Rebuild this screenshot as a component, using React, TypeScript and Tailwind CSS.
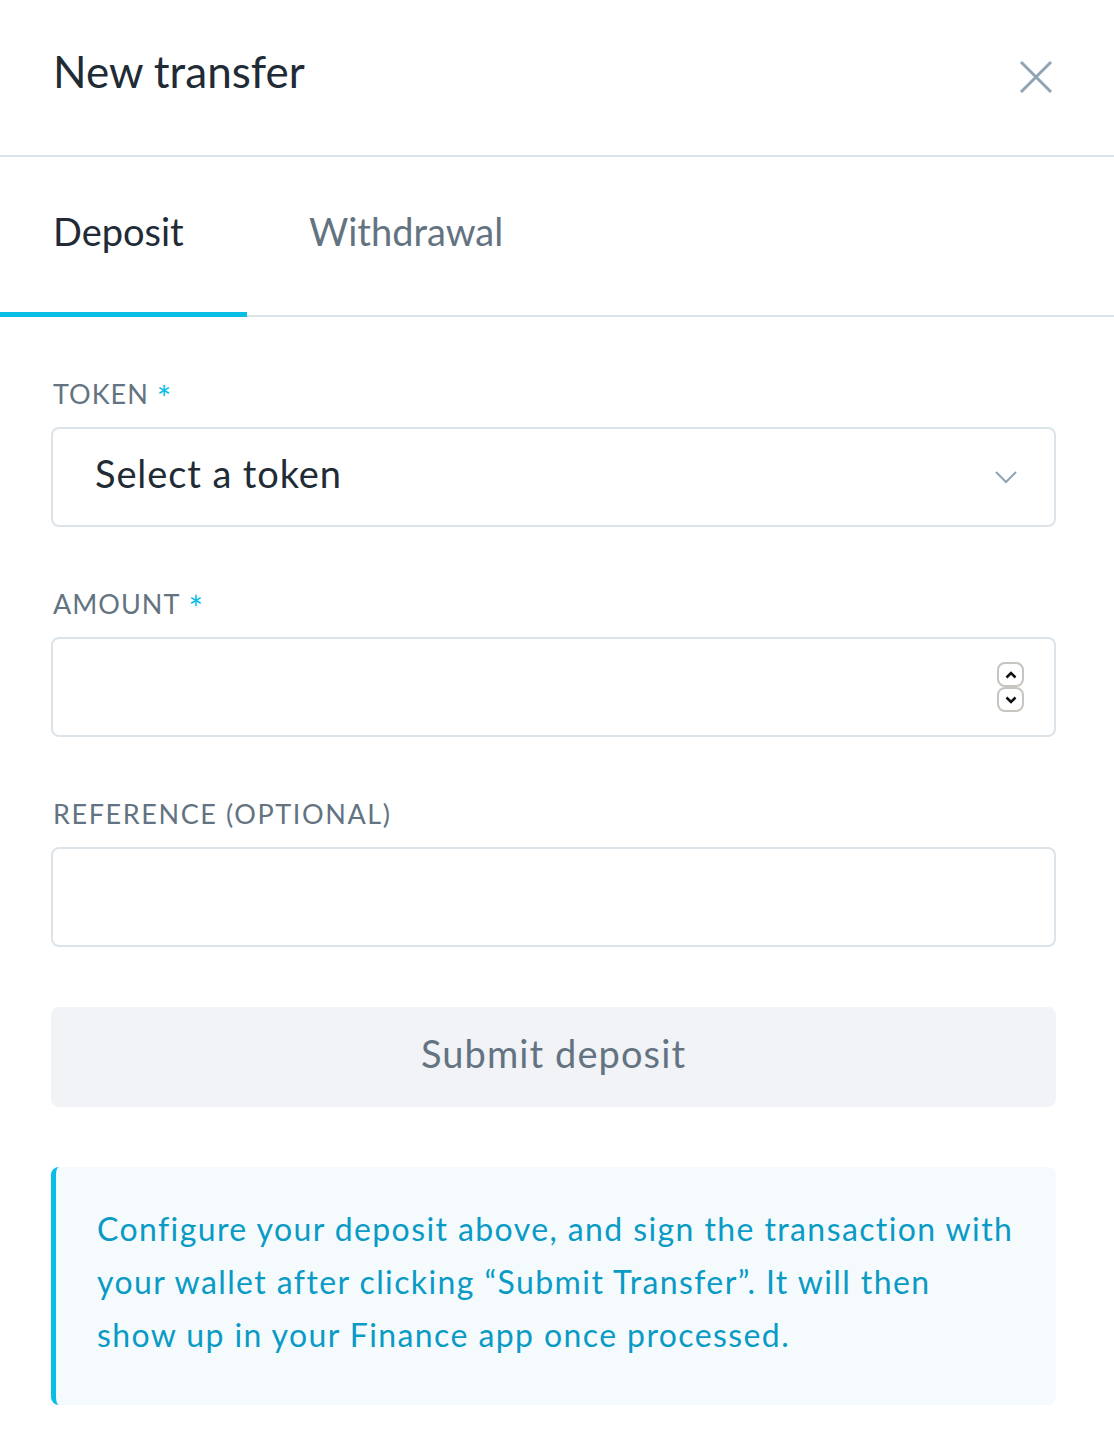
import React from 'react';

const font = { fontFamily: '"Lato", "Open Sans", sans-serif' };

const Label: React.FC<{ text: string; required?: boolean; wide?: boolean }> = ({ text, required, wide }) => (
    <div className={`text-[27px] leading-none ${wide ? 'tracking-[1.6px]' : 'tracking-[1px]'} text-[#637381] mb-[22px] h-[24px] flex items-center`}>
        {text}
        {required && <span className="text-[34px] text-[#08bee5] ml-[8px] mt-[10px]">*</span>}
    </div>
);

export default function App() {
    const [tab, setTab] = React.useState(0);

    return (
        <div className="w-[1114px] min-h-[1440px] bg-white" style={font}>
            {/* Header */}
            <div className="h-[157px] flex items-center justify-between pl-[53px] pr-[60px] border-b-2 border-[#dde4e9]">
                <h1 className="text-[44px] text-[#212b36] leading-none -mt-[14px]">New transfer</h1>
                <svg width="36" height="36" viewBox="0 0 36 36" className="-mt-[2px]">
                    <path d="M3 3 L33 33 M33 3 L3 33" stroke="#8fa4b5" strokeWidth="3" fill="none" />
                </svg>
            </div>

            {/* Tabs */}
            <div className="h-[160px] flex border-b-2 border-[#dde4e9]">
                {['Deposit', 'Withdrawal'].map((t, i) => (
                    <button
                        key={t}
                        onClick={() => setTab(i)}
                        className={`relative h-full flex items-center text-[38px] ${i === 0 ? 'w-[247px] pl-[53px]' : 'pl-[62px]'} ${tab === i ? 'text-[#212b36]' : 'text-[#637381]'}`}
                    >
                        <span className="-mt-[10px]">{t}</span>
                        {tab === i && <div className="absolute left-0 right-0 bottom-[-2px] h-[5px] bg-[#08bee5]" />}
                    </button>
                ))}
            </div>

            {/* Form */}
            <div className="pl-[51px] pr-[58px] pt-[64px]">
                <div className="pl-[2px]"><Label text="TOKEN" required /></div>
                <div className="h-[100px] border-2 border-[#dde4e9] rounded-[8px] flex items-center justify-between pl-[42px] pr-[36px]">
                    <span className="text-[38px] tracking-[0.9px] text-[#212b36] -mt-[8px]">Select a token</span>
                    <svg width="24" height="16" viewBox="0 0 24 16">
                        <path d="M2 3 L12 13 L22 3" stroke="#8fa4b5" strokeWidth="2" fill="none" />
                    </svg>
                </div>

                <div className="pl-[2px] mt-[64px]"><Label text="AMOUNT" required /></div>
                <div className="h-[100px] border-2 border-[#dde4e9] rounded-[8px] flex items-center justify-end pr-[30px]">
                    <div className="flex flex-col gap-0">
                        <div className="w-[27px] h-[25px] border-2 border-[#c8c4c0] rounded-[8px] flex items-center justify-center">
                            <svg width="12" height="8" viewBox="0 0 12 8"><path d="M1.5 6.5 L6 2 L10.5 6.5" stroke="#111" strokeWidth="2.5" fill="none" /></svg>
                        </div>
                        <div className="w-[27px] h-[25px] border-2 border-[#c8c4c0] rounded-[8px] flex items-center justify-center">
                            <svg width="12" height="8" viewBox="0 0 12 8"><path d="M1.5 1.5 L6 6 L10.5 1.5" stroke="#111" strokeWidth="2.5" fill="none" /></svg>
                        </div>
                    </div>
                </div>

                <div className="pl-[2px] mt-[64px]"><Label text="REFERENCE (OPTIONAL)" wide /></div>
                <div className="h-[100px] border-2 border-[#dde4e9] rounded-[8px]" />

                <button className="mt-[60px] w-full h-[100px] rounded-[8px] bg-[#f1f3f7] text-[38px] tracking-[1.1px] text-[#637381] flex items-center justify-center">
                    <span className="-mt-[8px]">Submit deposit</span>
                </button>

                <div className="mt-[60px] h-[238px] rounded-[8px] bg-[#f5fafd] border-l-[5px] border-[#08bee5] pl-[41px] pr-[40px] pt-[35px]">
                    <p className="text-[32px] leading-[53px] tracking-[1.4px] text-[#0a9ac6]">
                        Configure your deposit above, and sign the transaction with your wallet after clicking “Submit Transfer”. It will then show up in your Finance app once processed.
                    </p>
                </div>
            </div>
        </div>
    );
}
